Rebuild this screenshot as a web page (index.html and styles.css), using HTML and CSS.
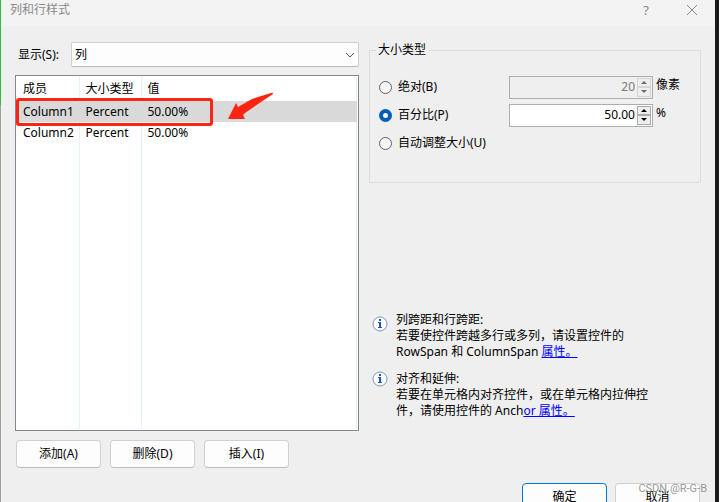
FILE: index.html
```
<!DOCTYPE html>
<html lang="zh-CN">

<head>
    <meta charset="UTF-8">
    <meta name="viewport" content="width=device-width, initial-scale=1.0">
    <title>列和行样式</title>
    <link rel="stylesheet" href="styles.css">
</head>

<body>
    <div class="dialog">
        <header class="titlebar">
            <h1 class="title">列和行样式</h1>
            <button type="button" class="help" aria-label="帮助">?</button>
            <button type="button" class="close" aria-label="关闭">
                <svg width="12" height="12" viewBox="0 0 12 12">
                    <path d="M1 1L11 11M11 1L1 11" stroke="#8a8a8a" fill="none" />
                </svg>
            </button>
        </header>

        <form class="content">
            <section class="left">
                <div class="show-row">
                    <label for="show">显示(S):</label>
                    <div class="select-wrap">
                        <select id="show">
                            <option>列</option>
                            <option>行</option>
                        </select>
                        <svg class="chevron" width="10" height="6" viewBox="0 0 10 6">
                            <path d="M1 1L5 5L9 1" stroke="#555" fill="none" />
                        </svg>
                    </div>
                </div>

                <div class="list">
                    <table>
                        <thead>
                            <tr>
                                <th class="col-member">成员</th>
                                <th class="col-type">大小类型</th>
                                <th>值</th>
                            </tr>
                        </thead>
                        <tbody>
                            <tr class="selected">
                                <td>Column1</td>
                                <td>Percent</td>
                                <td>50.00%</td>
                            </tr>
                            <tr>
                                <td>Column2</td>
                                <td>Percent</td>
                                <td>50.00%</td>
                            </tr>
                            <tr class="rest">
                                <td></td>
                                <td></td>
                                <td></td>
                            </tr>
                        </tbody>
                    </table>
                    <div class="mark"></div>
                    <svg class="arrow" width="48" height="30" viewBox="0 0 48 30">
                        <path d="M1 27L9 11L11 15L25 7L44 1Q46 0 46 2L34 10L18 21L16 23L18 27Z" fill="#ff2412" />
                    </svg>
                </div>

                <div class="actions">
                    <button type="button" class="btn">添加(A)</button>
                    <button type="button" class="btn">删除(D)</button>
                    <button type="button" class="btn">插入(I)</button>
                </div>
            </section>

            <section class="right">
                <fieldset class="size-type">
                    <legend>大小类型</legend>
                    <div class="option">
                        <input type="radio" name="size" id="absolute">
                        <label for="absolute">绝对(B)</label>
                        <div class="spin disabled">
                            <input type="text" value="20" aria-label="像素" disabled>
                            <div class="spin-buttons">
                                <button type="button" aria-label="增加" disabled><i class="up"></i></button>
                                <button type="button" aria-label="减少" disabled><i class="down"></i></button>
                            </div>
                        </div>
                        <span class="unit">像素</span>
                    </div>
                    <div class="option">
                        <input type="radio" name="size" id="percent" checked>
                        <label for="percent">百分比(P)</label>
                        <div class="spin">
                            <input type="text" value="50.00" aria-label="百分比">
                            <div class="spin-buttons">
                                <button type="button" aria-label="增加"><i class="up"></i></button>
                                <button type="button" aria-label="减少"><i class="down"></i></button>
                            </div>
                        </div>
                        <span class="unit">%</span>
                    </div>
                    <div class="option">
                        <input type="radio" name="size" id="auto">
                        <label for="auto">自动调整大小(U)</label>
                    </div>
                </fieldset>

                <div class="hints">
                    <div class="hint">
                        <svg class="info" width="16" height="16" viewBox="0 0 16 16">
                            <circle cx="8" cy="8" r="7" fill="#fbfdff" stroke="#8298b8" />
                            <path d="M7 3H9V5H7ZM6 6H9V11H10V12H6V11H7V7H6Z" fill="#2456b8" />
                        </svg>
                        <p>列跨距和行跨距:<br>若要使控件跨越多行或多列，请设置控件的<br>RowSpan 和 ColumnSpan <a href="#">属性。</a></p>
                    </div>
                    <div class="hint">
                        <svg class="info" width="16" height="16" viewBox="0 0 16 16">
                            <circle cx="8" cy="8" r="7" fill="#fbfdff" stroke="#8298b8" />
                            <path d="M7 3H9V5H7ZM6 6H9V11H10V12H6V11H7V7H6Z" fill="#2456b8" />
                        </svg>
                        <p>对齐和延伸:<br>若要在单元格内对齐控件，或在单元格内拉伸控<br>件，请使用控件的 Anch<a href="#">or 属性。</a></p>
                    </div>
                </div>
            </section>
        </form>

        <footer class="footer">
            <button type="button" class="btn primary">确定</button>
            <button type="button" class="btn">取消</button>
        </footer>
    </div>
    <div class="watermark">CSDN @R-G-B</div>
</body>

</html>
```
FILE: styles.css
```
* {
    box-sizing: border-box;
}

body {
    margin: 0;
    height: 100vh;
    overflow: hidden;
    position: relative;
    padding: 0 6px 0 1px;
    background: linear-gradient(#2fc02f, #2fc02f) 0 0 / 1px 105px no-repeat,
        linear-gradient(#a0a0a0, #a0a0a0) 0 0 / 1px 100% no-repeat,
        linear-gradient(#fff, #fff) 100% 0 / 2px 100% no-repeat,
        #1a1a1a;
    font: 12px/16px "Noto Sans", "Noto Sans CJK SC", sans-serif;
    color: #000;
}

button,
input,
select {
    font: inherit;
    color: inherit;
    margin: 0;
}

.dialog {
    background: #efefef;
    min-height: 100%;
}

.titlebar {
    display: flex;
    align-items: center;
    height: 26px;
    padding: 0 16px 6px 9px;
    background: #f3f3f3;
    color: #8a8a8a;
}

.title {
    flex: 1;
    margin: 0;
    font-size: 12px;
    font-weight: normal;
}

.titlebar button {
    padding: 0;
    border: 0;
    background: none;
    width: 14px;
    height: 16px;
}

.titlebar .help {
    font-size: 13px;
}

.titlebar .close {
    display: flex;
    align-items: center;
    justify-content: center;
    margin-left: 32px;
}

.content {
    display: grid;
    grid-template-columns: 344fr 332fr;
    gap: 10px;
    padding: 16px 14px 0;
}

.show-row {
    display: flex;
    align-items: center;
    gap: 12px;
    padding-left: 3px;
}

.select-wrap {
    position: relative;
    flex: 1;
}

select {
    appearance: none;
    display: block;
    width: 100%;
    height: 25px;
    padding: 0 3px;
    border: 1px solid #cfcfcf;
    border-bottom-color: #b8b8b8;
    border-radius: 2px;
    background: #fdfdfd;
}

.chevron {
    position: absolute;
    right: 4px;
    top: 10px;
}

.list {
    position: relative;
    height: 356px;
    margin-top: 8px;
    padding: 1px 1px 1px 0;
    border: 1px solid #828790;
    background: #fff;
}

table {
    width: 100%;
    height: 100%;
    table-layout: fixed;
    border-collapse: collapse;
}

th,
td {
    padding: 0 0 0 6px;
    border-right: 1px solid #e5f0fb;
    text-align: left;
    font-weight: normal;
}

th:first-child,
td:first-child {
    padding-left: 7px;
}

th {
    height: 24px;
}

td {
    height: 21px;
}

.rest td {
    height: auto;
}

.col-member {
    width: 63px;
}

.col-type {
    width: 62px;
}

.selected td {
    background: #d9d9d9;
    border-color: #d9d9d9;
}

/* red box and arrow drawn over the first row */
.mark {
    position: absolute;
    left: 0;
    top: 22px;
    width: 197px;
    height: 28px;
    border: 3px solid #ff2412;
    border-radius: 3px;
}

.arrow {
    position: absolute;
    left: 211px;
    top: 16px;
}

.actions {
    display: flex;
    gap: 9px;
    padding: 9px 0 0 1px;
}

.btn {
    width: 85px;
    height: 28px;
    padding: 0;
    border: 1px solid #d0d0d0;
    border-bottom-color: #bcbcbc;
    border-radius: 4px;
    background: #fdfdfd;
}

.btn.primary {
    border-color: #0078d4;
}

.size-type {
    height: 141px;
    min-width: 0;
    margin: 0;
    padding: 15px 44px 0 9px;
    border: 1px solid #dcdcdc;
}

legend {
    padding: 0 2px;
    margin-left: -3px;
}

.option {
    display: flex;
    align-items: center;
    height: 28px;
}

.option input[type="radio"] {
    appearance: none;
    width: 13px;
    height: 13px;
    border: 1px solid #626262;
    border-radius: 50%;
    background: #f6f6f6;
}

.option input[type="radio"]:checked {
    border: 4px solid #005fb8;
    background: #fff;
}

.option label {
    flex: 1;
    padding-left: 6px;
}

.spin {
    display: flex;
    width: 144px;
    height: 23px;
    padding: 1px;
    border: 1px solid #abadb3;
    background: #fff;
}

.spin input {
    flex: 1;
    min-width: 0;
    padding: 0 2px;
    border: 0;
    background: none;
    text-align: right;
}

.spin-buttons {
    display: flex;
    flex-direction: column;
    width: 14px;
}

.spin-buttons button {
    display: flex;
    flex: 1;
    align-items: center;
    justify-content: center;
    padding: 0;
    border: 1px solid #acacac;
    background: #eee;
}

.up,
.down {
    border: 3px solid transparent;
}

.up {
    border-top: 0;
    border-bottom: 3px solid #000;
}

.down {
    border-bottom: 0;
    border-top: 3px solid #000;
}

.disabled {
    background: #efefef;
    color: #7a7a7a;
}

.disabled button {
    border-color: #d5d5d5;
}

.disabled .up {
    border-bottom-color: #6d6d6d;
}

.disabled .down {
    border-top-color: #6d6d6d;
}

.unit {
    width: 0;
    padding: 0 0 4px 3px;
    white-space: nowrap;
}

.hints {
    display: grid;
    gap: 11px;
    padding: 129px 0 0 3px;
}

.hint {
    display: flex;
    gap: 8px;
}

.hint p {
    margin: 0;
    white-space: nowrap;
}

.info {
    margin-top: 4px;
}

.hint + .hint .info {
    margin-top: 0;
}

a {
    color: #00f;
}

.footer {
    display: flex;
    justify-content: flex-end;
    gap: 8px;
    padding: 15px 15px;
}

.watermark {
    position: absolute;
    right: 14px;
    bottom: 5px;
    color: #999;
    font: 11px/16px Roboto, sans-serif;
}
```
